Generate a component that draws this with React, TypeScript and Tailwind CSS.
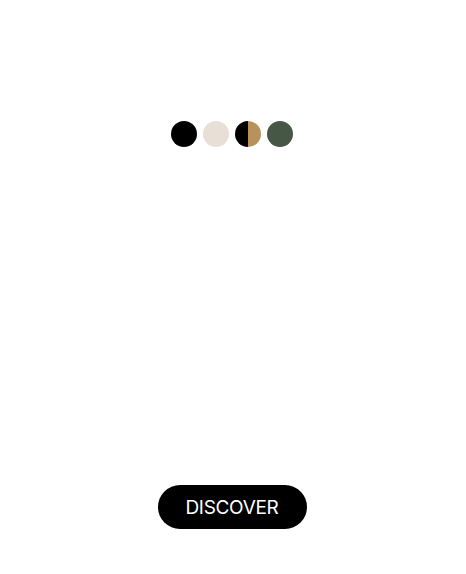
import React from 'react';

const swatches = [
  { name: 'black', className: 'bg-black' },
  { name: 'sand', className: 'bg-[#e8e0d6]' },
  { name: 'duo', className: 'bg-[linear-gradient(90deg,#000_50%,#b9925b_50%)]' },
  { name: 'forest', className: 'bg-[#475745]' },
];

export default function App() {
  return (
    <div className="h-[574px] w-full pr-[2px] bg-white flex flex-col items-center font-['Inter',sans-serif]">
      {/* Colour swatches */}
      <div className="mt-[121px] flex gap-[6px]">
        {swatches.map((s) => (
          <div key={s.name} className={`w-[26px] h-[26px] rounded-full ${s.className}`} />
        ))}
      </div>

      <div className="flex-1" />

      <button className="mb-[45px] w-[149px] h-[44px] rounded-full bg-black text-white text-[19px] leading-none tracking-[-0.3px]">
        DISCOVER
      </button>
    </div>
  );
}
